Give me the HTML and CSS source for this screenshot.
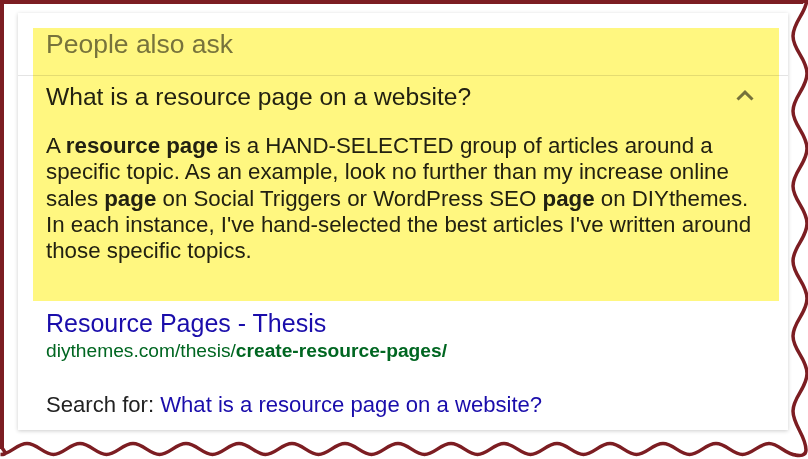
FILE: index.html
```html
<!DOCTYPE html>
<html lang="en">
<head>
<meta charset="utf-8">
<title>People also ask</title>
<link rel="stylesheet" href="styles.css">
</head>
<body>
<div class="frame">
  <div class="card">
    <div class="paa-header">People also ask</div>
    <div class="question-row">
      <span class="question">What is a resource page on a website?</span>
      <svg class="chevron" width="18" height="11" viewBox="0 0 18 11" aria-hidden="true">
        <polyline points="1.5,9.5 9,2.2 16.5,9.5" fill="none" stroke="#757575" stroke-width="3"/>
      </svg>
    </div>
    <p class="answer">A <b>resource page</b> is a HAND-SELECTED group of articles around a specific topic. As an example, look no further than my increase online sales <b>page</b> on Social Triggers or WordPress SEO <b>page</b> on DIYthemes. In each instance, I've hand-selected the best articles I've written around those specific topics.</p>
    <div class="result">
      <a class="result-title" href="#">Resource Pages - Thesis</a>
      <div class="result-url">diythemes.com/thesis/<b>create-resource-pages/</b></div>
    </div>
    <div class="search-for">Search for: <a href="#">What is a resource page on a website?</a></div>
    <div class="highlight"></div>
  </div>
  <svg class="torn-frame" width="808" height="459" viewBox="0 0 808 459" aria-hidden="true">
    <rect x="0" y="0" width="803" height="4" fill="#7c1d22"/>
    <rect x="0" y="0" width="4" height="449" fill="#7c1d22"/>
    <path fill="none" stroke="#7c1d22" stroke-width="3.5" stroke-linejoin="round"
      d="M800 2 C806 2 807 -1.5 807 -1.5
         M807 -1.5 C807 12 793 22 793 36
         C793 50 807 59 807 73.5
         C807 88 793 97 793 111
         C793 125 807 134 807 148.5
         C807 163 793 172 793 186
         C793 200 807 209 807 223.5
         C807 238 793 247 793 261
         C793 275 807 284 807 298.5
         C807 313 793 322 793 336
         C793 350 807 359 807 373.5
         C807 388 793 397 793 411
         C793 425 806 436 806 450
         C806 456 800 456 795 455"/>
    <path fill="none" stroke="#7c1d22" stroke-width="3.5" stroke-linejoin="round"
      d="M2 448 C5 452 8 454.5 0.5 454.5
         M0.5 454.5 C10 454.5 17 443.5 27 443.5
         C37 443.5 44 454.5 53.5 454.5
         C63 454.5 70 443.5 80 443.5
         C90 443.5 97 454.5 106.5 454.5
         C116 454.5 123 443.5 133 443.5
         C143 443.5 150 454.5 159.5 454.5
         C169 454.5 176 443.5 186 443.5
         C196 443.5 203 454.5 212.5 454.5
         C222 454.5 229 443.5 239 443.5
         C249 443.5 256 454.5 265.5 454.5
         C275 454.5 282 443.5 292 443.5
         C302 443.5 309 454.5 318.5 454.5
         C328 454.5 335 443.5 345 443.5
         C355 443.5 362 454.5 371.5 454.5
         C381 454.5 388 443.5 398 443.5
         C408 443.5 415 454.5 424.5 454.5
         C434 454.5 441 443.5 451 443.5
         C461 443.5 468 454.5 477.5 454.5
         C487 454.5 494 443.5 504 443.5
         C514 443.5 521 454.5 530.5 454.5
         C540 454.5 547 443.5 557 443.5
         C567 443.5 574 454.5 583.5 454.5
         C593 454.5 600 443.5 610 443.5
         C620 443.5 627 454.5 636.5 454.5
         C646 454.5 653 443.5 663 443.5
         C673 443.5 680 454.5 689.5 454.5
         C699 454.5 706 443.5 716 443.5
         C726 443.5 733 454.5 742.5 454.5
         C752 454.5 759 443.5 769 443.5
         C779 443.5 786 455 796 455"/>
  </svg>
</div>
</body>
</html>
```
FILE: styles.css
```css
html, body {
  margin: 0;
  padding: 0;
  background: #ffffff;
}

body {
  font-family: "Liberation Sans", Arial, Helvetica, sans-serif;
  color: #222222;
}

.frame {
  position: relative;
  width: 808px;
  height: 459px;
  box-sizing: border-box;
  padding: 13px 20px 0 18px;
  overflow: hidden;
}

.card {
  position: relative;
  height: 417px;
  background: #ffffff;
  box-shadow: 0 1px 4px rgba(0, 0, 0, 0.2);
}

.paa-header {
  font-size: 26.5px;
  line-height: 60px;
  padding: 1px 28px 1px;
  color: #777777;
  border-bottom: 1px solid #e4e4e4;
  white-space: nowrap;
}

.question-row {
  display: flex;
  align-items: center;
  justify-content: space-between;
  padding: 6px 34px 0 28px;
}

.question {
  font-size: 24.6px;
  line-height: 30px;
  color: #222222;
  white-space: nowrap;
}

.chevron {
  display: block;
  margin-top: -3px;
}

.answer {
  margin: 21px 0 0;
  padding: 0 26px 0 28px;
  font-size: 22.3px;
  line-height: 26.3px;
  color: #222222;
}

.answer b {
  font-weight: bold;
}

.result {
  margin-top: 43.5px;
  padding: 0 28px;
}

.result-title {
  display: block;
  font-size: 25px;
  line-height: 31px;
  color: #1a0dab;
  text-decoration: none;
  white-space: nowrap;
}

.result-url {
  font-size: 19.2px;
  line-height: 24px;
  color: #006621;
  white-space: nowrap;
}

.search-for {
  margin-top: 28.5px;
  padding: 0 28px;
  font-size: 22.1px;
  line-height: 28px;
  color: #222222;
  white-space: nowrap;
}

.search-for a {
  color: #1a0dab;
  text-decoration: none;
}

.highlight {
  position: absolute;
  left: 15px;
  top: 15px;
  width: 746px;
  height: 273px;
  background: #fff780;
  mix-blend-mode: multiply;
  pointer-events: none;
}

.torn-frame {
  position: absolute;
  left: 0;
  top: 0;
  pointer-events: none;
}
```
